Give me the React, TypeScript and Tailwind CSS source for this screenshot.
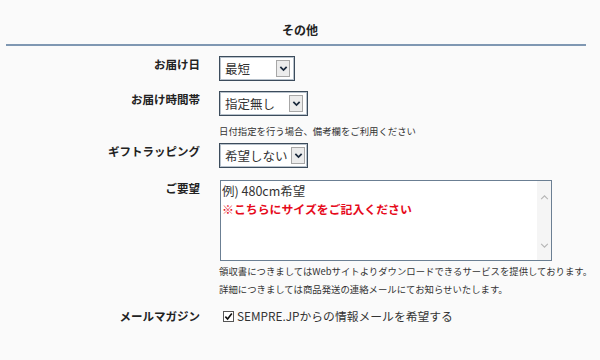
import { ReactNode } from "react";

export default function App() {
  return (
    <main className="h-[360px] w-[600px] overflow-hidden bg-[#fafafa] font-['Noto_Sans_CJK_JP',sans-serif] text-[#222]">
      <h2 className="pt-[21px] text-center text-[12px] font-bold leading-[18px] text-[#222]">
        その他
      </h2>
      <div className="mx-[6px] mt-[5px] h-[2px] w-[580px] bg-[#7f97b2]" />

      <div className="mt-[10px] grid grid-cols-[200px_1fr] gap-x-[19px]">
        <Label>お届け日</Label>
        <div>
          <SelectBox value="最短" className="w-[76px]" />
        </div>

        <Label className="mt-[10px]">お届け時間帯</Label>
        <div className="mt-[10px]">
          <SelectBox value="指定無し" className="w-[89px]" />
          <p className="mt-[8px] text-[9.4px] leading-[14px] text-[#333]">
            日付指定を行う場合、備考欄をご利用ください
          </p>
        </div>

        <Label className="mt-[5px]">ギフトラッピング</Label>
        <div className="mt-[5px]">
          <SelectBox value="希望しない" className="w-[89px]" tight />
        </div>

        <Label className="mt-[12px]">ご要望</Label>
        <div className="mt-[12px]">
          <div className="ml-[1px] flex h-[81px] w-[332px] border border-[#6b7f93] bg-white">
            <div className="flex-1 px-[1px] pt-[1px]">
              <p className="text-[12.5px] leading-[18px] text-[#333]">例) 480cm希望</p>
              <p className="text-[11.9px] font-bold leading-[17px] text-[#e60b1c]">
                ※こちらにサイズをご記入ください
              </p>
            </div>
            <div className="flex w-[14px] flex-col items-center justify-between bg-[#f5f5f5] pb-[12px] pt-[14px]">
              <Chevron up />
              <Chevron />
            </div>
          </div>
          <p className="mt-[1px] text-[9.4px] leading-[18px] text-[#333]">
            領収書につきましてはWebサイトよりダウンロードできるサービスを提供しております。
          </p>
          <p className="text-[9.4px] leading-[18px] text-[#333]">
            詳細につきましては商品発送の連絡メールにてお知らせいたします。
          </p>
        </div>

        <Label className="mt-[10px]">メールマガジン</Label>
        <div className="mt-[10px] flex items-center gap-[3px] pl-[4px]">
          <span className="flex h-[11px] w-[11px] items-center justify-center border border-[#555] bg-white">
            <svg viewBox="0 0 10 10" className="h-[9px] w-[9px]">
              <path d="M1.5 5.2 L4 7.8 L8.7 1.8" fill="none" stroke="#111" strokeWidth="1.8" />
            </svg>
          </span>
          <span className="text-[11.8px] leading-[16px] text-[#333]">
            SEMPRE.JPからの情報メールを希望する
          </span>
        </div>
      </div>
    </main>
  );
}

const Label = ({ children, className = "" }: { children: ReactNode; className?: string }) => (
  <div className={`text-right text-[11.5px] font-bold leading-[16px] text-[#222] ${className}`}>
    {children}
  </div>
);

const SelectBox = ({
  value,
  className = "",
  tight = false,
}: {
  value: string;
  className?: string;
  tight?: boolean;
}) => (
  <div
    className={`flex h-[25px] items-center justify-between border border-[#3c4c5c] bg-white shadow-[inset_0_0_0_1px_#b8c2cc] ${
      tight ? "pl-[5px] pr-[2px]" : "pl-[5px] pr-[4px]"
    } ${className}`}
  >
    <span className="whitespace-nowrap text-[12.5px] leading-[16px] text-[#333]">{value}</span>
    <span className="flex h-[17px] w-[14px] shrink-0 items-center justify-center border border-[#a7a7a7] bg-[#ececec]">
      <svg viewBox="0 0 10 10" className="h-[9px] w-[9px]">
        <path d="M1.5 3.2 L5 6.8 L8.5 3.2" fill="none" stroke="#1b2a3d" strokeWidth="1.9" />
      </svg>
    </span>
  </div>
);

const Chevron = ({ up = false }: { up?: boolean }) => (
  <svg viewBox="0 0 10 6" className="h-[5px] w-[9px]">
    <path
      d={up ? "M1 5 L5 1 L9 5" : "M1 1 L5 5 L9 1"}
      fill="none"
      stroke="#b5b5b5"
      strokeWidth="1.3"
    />
  </svg>
);
